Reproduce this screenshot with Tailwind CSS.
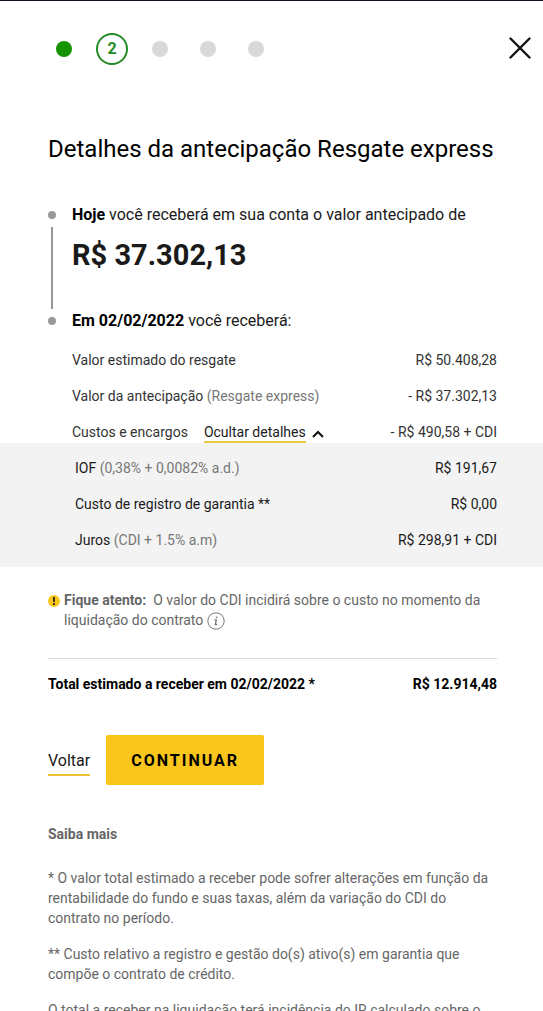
<!DOCTYPE html>
<html lang="pt-BR">
<head>
<meta charset="utf-8">
<meta name="viewport" content="width=device-width, initial-scale=1">
<title>Resgate express</title>
<script src="https://cdn.jsdelivr.net/npm/@tailwindcss/browser@4"></script>
</head>
<body class="bg-white font-['Roboto',sans-serif] text-[#1a1a1a] text-sm leading-5 overflow-x-hidden [scrollbar-width:none]">
<div class="border-t border-[#111122]">
  <header class="flex items-center justify-between pl-14 pr-[11px] pt-8">
    <ol class="flex items-center gap-8 h-8" aria-label="Etapas">
      <li class="size-4 rounded-full bg-[#149400]"></li>
      <li class="-mx-2 size-8 rounded-full border-2 border-[#258c25] text-[#258c25] text-base font-bold flex items-center justify-center">2</li>
      <li class="size-4 rounded-full bg-[#d8d8d8]"></li>
      <li class="size-4 rounded-full bg-[#d8d8d8]"></li>
      <li class="size-4 rounded-full bg-[#d8d8d8]"></li>
    </ol>
    <button type="button" aria-label="Fechar"><svg class="size-6" viewBox="0 0 24 24" fill="none" stroke="#111" stroke-width="2.4" stroke-linecap="round"><path d="M2.5 1.5 21.5 20.5M21.5 1.5 2.5 20.5"/></svg></button>
  </header>
  <main>
    <h1 class="px-12 mt-17 text-2xl leading-8 text-black">Detalhes da antecipação Resgate express</h1>
    <div class="flex pl-12 mt-10 gap-4">
      <div class="flex flex-col items-center w-2 pt-1.5 pb-1.5 gap-2">
        <span class="size-2 rounded-full bg-[#999]"></span>
        <span class="w-0.5 grow bg-[#999]"></span>
        <span class="size-2 rounded-full bg-[#999]"></span>
      </div>
      <div class="text-base text-[#1a1a1a]">
        <p class="leading-5"><b class="text-black">Hoje</b> você receberá em sua conta o valor antecipado de</p>
        <p class="mt-2.5 text-[29px] leading-10 font-bold">R$ 37.302,13</p>
        <p class="mt-9 leading-5"><b class="text-black">Em 02/02/2022</b> você receberá:</p>
      </div>
    </div>
    <dl class="mt-[11px]">
      <div class="flex justify-between h-9 items-center pl-18 pr-[46px] text-[#333]"><dt>Valor estimado do resgate</dt><dd>R$ 50.408,28</dd></div>
      <div class="flex justify-between h-9 items-center pl-18 pr-[46px] text-[#333]"><dt>Valor da antecipação <span class="text-[#777]">(Resgate express)</span></dt><dd>- R$ 37.302,13</dd></div>
      <div class="flex justify-between h-9 items-center pl-18 pr-[46px] text-[#333]"><dt class="flex items-center">Custos e encargos<button type="button" class="ml-4 flex items-center gap-1.5 text-[#1a1a1a]"><span class="border-b-2 border-[#e8c840] pt-0.5 leading-[18px]">Ocultar detalhes</span><svg class="w-3 h-2 mt-1" viewBox="0 0 12 8" fill="none" stroke="#111" stroke-width="2"><path d="m1 7 5-5 5 5"/></svg></button></dt><dd>- R$ 490,58 + CDI</dd></div>
    </dl>
    <dl class="-mt-[7px] bg-[#f3f3f3] pt-[7px] pb-[9px]">
      <div class="flex justify-between h-9 items-center pl-[75px] pr-[46px]"><dt>IOF <span class="text-[#777]">(0,38% + 0,0082% a.d.)</span></dt><dd>R$ 191,67</dd></div>
      <div class="flex justify-between h-9 items-center pl-[75px] pr-[46px]"><dt>Custo de registro de garantia **</dt><dd>R$ 0,00</dd></div>
      <div class="flex justify-between h-9 items-center pl-[75px] pr-[46px]"><dt>Juros <span class="text-[#777]">(CDI + 1.5% a.m)</span></dt><dd>R$ 298,91 + CDI</dd></div>
    </dl>
    <div class="px-12 pt-[23px] text-[#666]">
      <div class="flex gap-1">
        <svg class="size-3 mt-[5px] shrink-0" viewBox="0 0 12 12"><circle cx="6" cy="6" r="6" fill="#fac61b"/><path d="M6 2v5M6 8v2" stroke="#111" stroke-width="1.6"/></svg>
        <p><b>Fique atento:</b>&nbsp; O valor do CDI incidirá sobre o custo no momento da liquidação do contrato <svg class="inline size-[18px]" viewBox="0 0 18 18" fill="none" stroke="#777"><circle cx="9" cy="9" r="8.2"/><path d="M7.5 7.8h1.8l-1 4.7h1.8" stroke-width="1.3"/><circle cx="9.6" cy="5.3" r=".9" fill="#777" stroke="none"/></svg></p>
      </div>
    </div>
    <div class="ml-12 mr-[46px] mt-7 border-t border-[#d8d8d8] pt-[15px] flex justify-between font-bold text-black"><span>Total estimado a receber em 02/02/2022 *</span><span>R$ 12.914,48</span></div>
    <div class="px-12 mt-[41px] flex items-center gap-4">
      <a href="#" class="text-base text-[#1a1a1a] border-b-2 border-[#ecc035] pt-px pb-px mt-1">Voltar</a>
      <button type="button" class="h-[50px] w-[158px] pt-0.5 bg-[#fac61b] rounded-xs text-base font-bold tracking-[2px] text-black">CONTINUAR</button>
    </div>
    <section class="px-12 mt-[39px] text-[#666]">
      <h2 class="font-bold">Saiba mais</h2>
      <p class="mt-6">* O valor total estimado a receber pode sofrer alterações em função da rentabilidade do fundo e suas taxas, além da variação do CDI do contrato no período.</p>
      <p class="mt-4">** Custo relativo a registro e gestão do(s) ativo(s) em garantia que compõe o contrato de crédito.</p>
      <p class="mt-4">O total a receber na liquidação terá incidência do IR calculado sobre o</p>
    </section>
  </main>
</div>
</body>
</html>
